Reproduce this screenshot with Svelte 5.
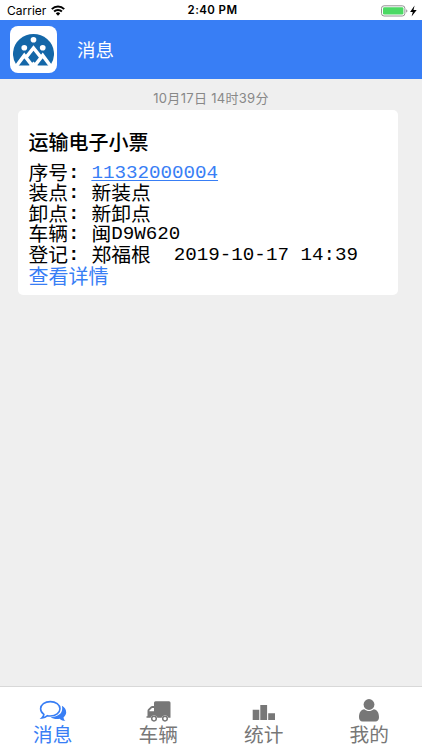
<script lang="ts">
  const rows = [
    { label: "装点", value: "新装点" },
    { label: "卸点", value: "新卸点" },
    { label: "车辆", value: "闽", code: "D9W620" },
    { label: "登记", value: "郑福根", code: "  2019-10-17 14:39" },
  ];

  const tabs = [
    { id: "message", label: "消息" },
    { id: "vehicle", label: "车辆" },
    { id: "stats", label: "统计" },
    { id: "mine", label: "我的" },
  ];

  let active = $state("message");
</script>

<div class="screen">
  <div class="status">
    <div class="carrier">
      <span>Carrier</span>
      <svg width="14" height="11" viewBox="0 0 14 11" fill="none" stroke="#000" stroke-width="2">
        <path d="M.8 4.1a8.8 8.8 0 0 1 12.4 0M3.1 6.5a5.5 5.5 0 0 1 7.8 0" />
        <path d="M7 10.7 4.8 8.4a3.2 3.2 0 0 1 4.4 0z" fill="#000" stroke="none" />
      </svg>
    </div>
    <div class="time">2:40 PM</div>
    <div class="power">
      <svg width="37" height="12" viewBox="0 0 37 12">
        <rect x=".5" y=".8" width="23.4" height="10.2" rx="2.6" fill="#fff" stroke="#929292" />
        <rect x="2" y="2.3" width="20.4" height="7.2" rx="1.3" fill="#4cd964" />
        <path d="M25.2 4.2c1.6.5 1.6 2.9 0 3.4z" fill="#929292" />
        <path d="M33.6.6 29.1 6.9h2.7l-1.2 4.6 5.1-6.5h-3.2z" fill="#000" />
      </svg>
    </div>
  </div>

  <header>
    <div class="logo">
      <svg width="41" height="34" viewBox="0 0 40 34" preserveAspectRatio="none">
        <path d="M3.6 33.5a20 20 0 1 1 32.8 0z" fill="#1467a8" />
        <g fill="#fff">
          <circle cx="20" cy="7.8" r="2.8" />
          <circle cx="11" cy="15.8" r="2.8" />
          <circle cx="29" cy="15.8" r="2.8" />
        </g>
        <g fill="none" stroke="#fff" stroke-width="3.4">
          <path d="M3 34.5 11 23.400l8.800 11.600M20.200 35 29 23.400l8 11.100" />
          <path d="M12.500 25.600 20 16l7.500 9.600" />
        </g>
        <path d="m20 29.500 4.500 4.500h-9z" fill="#fff" />
      </svg>
    </div>
    <h1>消息</h1>
  </header>

  <main>
    <div class="date">10月17日 14时39分</div>
    <article>
      <h2>运输电子小票</h2>
      <div class="row">
        <span>序号</span><span class="mono colon">:</span><a class="mono" href="#ticket">11332000004</a>
      </div>
      {#each rows as row}
        <div class="row">
          <span>{row.label}</span><span class="mono colon">:</span><span>{row.value}</span>
          {#if row.code}<span class="mono">{row.code}</span>{/if}
        </div>
      {/each}
      <div class="detail">查看详情</div>
    </article>
  </main>

  <nav>
    {#each tabs as tab}
      <button class:active={active === tab.id} onclick={() => (active = tab.id)}>
        <svg width="32" height="28" viewBox="0 0 32 28" fill="currentColor">
          {#if tab.id === "message"}
            <path
              d="M13.3 4.6c5.4 0 9.7 3.2 9.7 7.2s-4.3 7.2-9.7 7.2c-1 0-1.9-.1-2.8-.3-1.5 1.2-3.3 2-5.5 2.2 1-.9 1.7-2 1.9-3.5-2-1.3-3.3-3.3-3.3-5.6 0-4 4.3-7.2 9.7-7.2z"
              fill="none"
              stroke="currentColor"
              stroke-width="1.6"
            />
            <path d="M24.900 8.800c2.700 1.400 4.300 3.800 4.300 6.400 0 2-1.100 3.900-2.700 5.200.2 1.600.9 2.700 2 3.600-2.200-.1-4.300-.9-5.900-2.300-3.500.7-6.700 0-9-1.500 6.500-.2 11.600-3.400 11.600-8.500 0-.9-.1-2-.3-2.900z" />
          {:else if tab.id === "vehicle"}
            <path
              fill-rule="evenodd"
              d="M13.500 4.300H27q1.500 0 1.500 1.500v15h-2.100a3.500 3.500 0 0 0-6.800 0h-4.200a3.500 3.500 0 0 0-6.800 0H4.500v-1.500h1v-5.500c0-.8.300-1.300.8-1.800l2.300-2.300c.5-.5 1-.7 1.700-.7h1.700V5.800q0-1.500 1.500-1.500zM7.300 14.200H12V11h-1.600c-.3 0-.5.100-.7.300l-2.200 2.200c-.2.200-.2.400-.2.700z"
            />
            <g fill="none" stroke="currentColor" stroke-width="1.500">
              <circle cx="12" cy="21.600" r="2.300" />
              <circle cx="23" cy="21.600" r="2.300" />
            </g>
          {:else if tab.id === "stats"}
            <path d="M4.700 12.700h6.600V23H4.700zM12.300 8h6.800v15h-6.800zM20.200 16.200h6.800V23h-6.800z" />
          {:else}
            <circle cx="16" cy="7.500" r="5.400" />
            <path d="M11.300 12.200c2.700 2.400 6.700 2.400 9.400 0 3.400.4 5.300 3.500 5.300 8 0 2.600-1.300 4.300-3.500 4.300h-13C7.300 24.500 6 22.800 6 20.200c0-4.500 1.900-7.600 5.300-8z" />
          {/if}
        </svg>
        <span>{tab.label}</span>
      </button>
    {/each}
  </nav>
</div>

<style>
  :global(body) {
    background: #efefef;
  }
  .screen {
    display: flex;
    flex-direction: column;
    height: 750px;
    overflow: hidden;
    font-family: "Inter", "Noto Sans CJK SC", sans-serif;
    color: #000;
  }
  .status {
    display: grid;
    grid-template-columns: 1fr auto 1fr;
    align-items: center;
    flex: 0 0 20px;
    box-sizing: border-box;
    padding: 1px 4px 0 7px;
    background: #fff;
    font-size: 12px;
    line-height: 19px;
  }
  .carrier {
    display: flex;
    align-items: center;
    gap: 5px;
  }
  .time {
    font-size: 11.5px;
    font-weight: 600;
    letter-spacing: 0.4px;
  }
  .power {
    display: flex;
    justify-content: flex-end;
  }
  header {
    display: flex;
    align-items: center;
    flex: 0 0 59px;
    box-sizing: border-box;
    padding: 0 10px 1px;
    background: #387ef5;
  }
  .logo {
    display: grid;
    place-items: center;
    width: 47px;
    height: 47px;
    border-radius: 8px;
    background: #fff;
  }
  h1 {
    margin: 1px 0 0 20px;
    color: #fff;
    font-size: 18.5px;
    font-weight: 400;
    line-height: 28px;
  }
  main {
    flex: 1;
    padding: 9px 24px 0 18px;
    background: #efefef;
  }
  .date {
    margin-left: 6px;
    color: #888;
    font-size: 13px;
    letter-spacing: 0.3px;
    line-height: 21px;
    text-align: center;
  }
  article {
    box-sizing: border-box;
    height: 185px;
    margin-top: 1px;
    padding: 19px 10.5px 0;
    border-radius: 5px;
    background: #fff;
  }
  h2 {
    margin: 0 0 6px;
    font-size: 20px;
    font-weight: 500;
    line-height: 28px;
  }
  .row {
    display: flex;
    height: 20.4px;
    font-size: 19.8px;
    line-height: 20.4px;
    white-space: pre;
  }
  .mono {
    font-family: "Liberation Mono", monospace;
    font-size: 19.2px;
  }
  .colon {
    width: 23.3px;
    font-weight: 700;
  }
  a,
  .detail {
    color: #387ef5;
  }
  a {
    text-underline-offset: 2px;
  }
  .detail {
    font-size: 20px;
    line-height: 24px;
  }
  nav {
    display: grid;
    grid-template-columns: repeat(4, 1fr);
    flex: 0 0 64px;
    box-sizing: border-box;
    border-top: 1px solid #d8d8d8;
    background: #fff;
  }
  button {
    display: flex;
    flex-direction: column;
    align-items: center;
    padding: 10px 0 0;
    border: none;
    background: none;
    color: #777;
    font-family: inherit;
    font-size: 19.7px;
    line-height: 24px;
  }
  button svg {
    flex: none;
    margin-bottom: -2px;
  }
  button.active {
    color: #387ef5;
  }
</style>
